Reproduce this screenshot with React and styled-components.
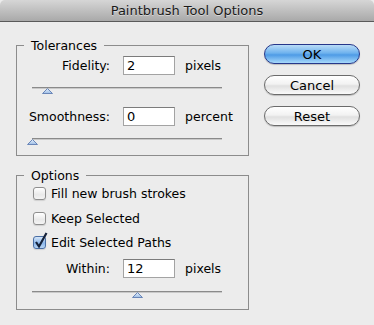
import React from "react";
import styled, { createGlobalStyle } from "styled-components";

const Global = createGlobalStyle`
  html, body {
    margin: 0;
    padding: 0;
    background: #ececec;
  }
  body {
    font-family: "DejaVu Sans", "Liberation Sans", sans-serif;
    font-size: 12.5px;
    color: #000;
  }
`;

const Window = styled.div`
  width: 374px;
  height: 325px;
  background: #ececec;
  display: flex;
  flex-direction: column;
  overflow: hidden;
`;

const TitleBar = styled.div`
  height: 21px;
  border-bottom: 1px solid #5a5a5a;
  border-radius: 5px 5px 0 0;
  background: linear-gradient(#d6d6d6, #a9a9a9);
  display: flex;
  align-items: center;
  justify-content: center;
  font-size: 13px;
  color: #1a1a1a;
  text-shadow: 0 1px 0 rgba(255, 255, 255, 0.45);
`;

const Body = styled.div`
  display: flex;
  align-items: flex-start;
  padding: 16px 0 0 16px;
`;

const LeftColumn = styled.div`
  width: 233px;
  display: flex;
  flex-direction: column;
  gap: 12px;
`;

const Group = styled.fieldset`
  margin: 0;
  padding: 0 0 0 7px;
  border: 1px solid #8c8c8c;
  min-width: 0;
  height: ${({ $h }) => $h}px;
  box-sizing: border-box;
`;

const Legend = styled.legend`
  padding: 0 7px;
  font-size: 12.5px;
  line-height: 15px;
`;

const FieldRow = styled.div`
  display: flex;
  align-items: center;
  margin-top: ${({ $mt }) => $mt || 0}px;
`;

const Label = styled.span`
  width: 86px;
  text-align: right;
  margin-right: 13px;
  white-space: nowrap;
`;

const NumberBox = styled.div`
  width: 52px;
  height: 19px;
  box-sizing: border-box;
  background: #fff;
  border: 1px solid #a3a3a3;
  border-top-color: #7b7b7b;
  padding-left: 3px;
  font-size: 13px;
  line-height: 17px;
`;

const Unit = styled.span`
  margin-left: 10px;
`;

const Track = styled.div`
  position: relative;
  width: 190px;
  height: 0;
  margin-left: 8px;
  margin-top: ${({ $mt }) => $mt}px;
  border-top: 1px solid #8a8a8a;
  border-bottom: 1px solid #c9c9c9;
`;

const Thumb = styled.svg`
  position: absolute;
  top: 0;
  margin-left: -5px;
`;

const CheckRow = styled.label`
  display: flex;
  align-items: center;
  margin-left: 9px;
  margin-top: ${({ $mt }) => $mt}px;
  height: 14px;
`;

const Box = styled.span`
  position: relative;
  width: 13px;
  height: 13px;
  box-sizing: border-box;
  border-radius: 3px;
  border: 1px solid ${({ $on }) => ($on ? "#4a6fa5" : "#8e8e8e")};
  background: ${({ $on }) =>
    $on
      ? "linear-gradient(#d6e6f8, #8cb7ea 55%, #b6d4f4)"
      : "linear-gradient(#ffffff, #e9e9e9 60%, #f4f4f4)"};
  box-shadow: 0 1px 1px rgba(0, 0, 0, 0.12);
  margin-right: 5px;
`;

const Check = styled.svg`
  position: absolute;
  left: 0px;
  top: -5px;
`;

const RightColumn = styled.div`
  display: flex;
  flex-direction: column;
  gap: 11px;
  margin-left: 15px;
  margin-top: 6px;
`;

const Button = styled.div`
  width: 96px;
  height: 20px;
  box-sizing: border-box;
  border-radius: 10px;
  display: flex;
  align-items: center;
  justify-content: center;
  font-size: 13px;
  border: 1px solid ${({ $primary }) => ($primary ? "#26378a" : "#6b6b6b")};
  background: ${({ $primary }) =>
    $primary
      ? "linear-gradient(#b9dcf7 0%, #6eb2ee 45%, #4e9be6 55%, #a7d9fb 100%)"
      : "linear-gradient(#ffffff 0%, #f2f2f2 45%, #e0e0e0 55%, #fafafa 100%)"};
  box-shadow: 0 1px 1px rgba(0, 0, 0, 0.2);
`;

const Slider = ({ value, mt }) => (
  <Track $mt={mt}>
    <Thumb width="11" height="6" viewBox="0 0 11 6" style={{ left: `${value}%` }}>
      <defs>
        <linearGradient id="tg" x1="0" y1="0" x2="0" y2="1">
          <stop offset="0" stopColor="#e6f0fb" />
          <stop offset="1" stopColor="#9cbde6" />
        </linearGradient>
      </defs>
      <polygon points="5.5,0.5 10.5,5.5 0.5,5.5" fill="url(#tg)" stroke="#6a86b8" strokeWidth="1" />
    </Thumb>
  </Track>
);

const CheckBox = ({ on, label, mt }) => (
  <CheckRow $mt={mt}>
    <Box $on={on}>
      {on && (
        <Check width="14" height="17" viewBox="0 0 14 17">
          <path d="M2 10 L5 14.5 L12.5 1" fill="none" stroke="#15223a" strokeWidth="2.2" />
        </Check>
      )}
    </Box>
    {label}
  </CheckRow>
);

export default function App() {
  return (
    <>
      <Global />
      <Window>
        <TitleBar>Paintbrush Tool Options</TitleBar>
        <Body>
          <LeftColumn>
            <Group $h={118}>
              <Legend>Tolerances</Legend>
              <FieldRow $mt={3}>
                <Label>Fidelity:</Label>
                <NumberBox>2</NumberBox>
                <Unit>pixels</Unit>
              </FieldRow>
              <Slider value={8} mt={12} />
              <FieldRow $mt={18}>
                <Label>Smoothness:</Label>
                <NumberBox>0</NumberBox>
                <Unit>percent</Unit>
              </FieldRow>
              <Slider value={0} mt={12} />
            </Group>
            <Group $h={142}>
              <Legend>Options</Legend>
              <CheckBox label="Fill new brush strokes" mt={3} />
              <CheckBox label="Keep Selected" mt={11} />
              <CheckBox on label="Edit Selected Paths" mt={10} />
              <FieldRow $mt={10}>
                <Label>Within:</Label>
                <NumberBox>12</NumberBox>
                <Unit>pixels</Unit>
              </FieldRow>
              <Slider value={55} mt={13} />
            </Group>
          </LeftColumn>
          <RightColumn>
            <Button $primary>OK</Button>
            <Button>Cancel</Button>
            <Button>Reset</Button>
          </RightColumn>
        </Body>
      </Window>
    </>
  );
}
